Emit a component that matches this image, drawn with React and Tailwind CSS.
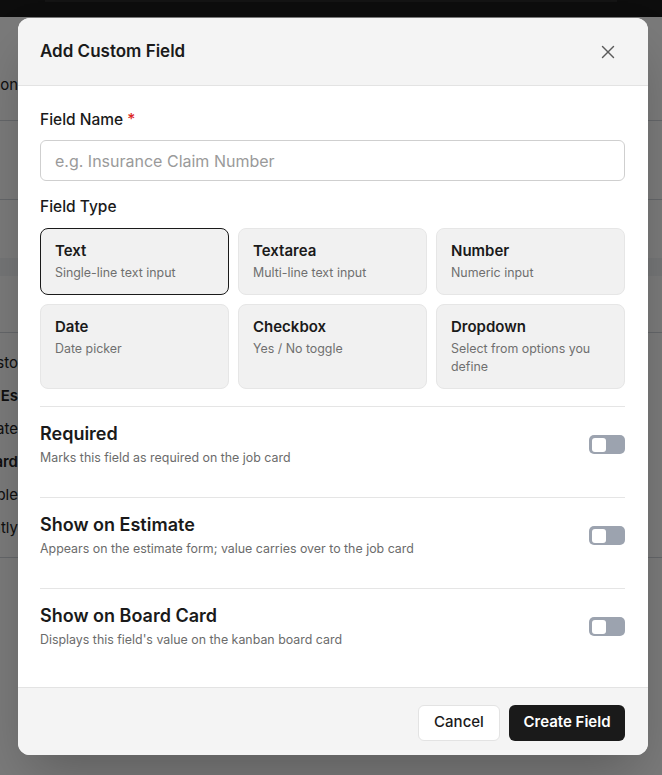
import { X } from 'lucide-react';

const fieldTypes = [
  { name: 'Text', desc: 'Single-line text input' },
  { name: 'Textarea', desc: 'Multi-line text input' },
  { name: 'Number', desc: 'Numeric input' },
  { name: 'Date', desc: 'Date picker' },
  { name: 'Checkbox', desc: 'Yes / No toggle' },
  { name: 'Dropdown', desc: 'Select from options you define' },
];

const toggles = [
  { title: 'Required', desc: 'Marks this field as required on the job card' },
  { title: 'Show on Estimate', desc: 'Appears on the estimate form; value carries over to the job card' },
  { title: 'Show on Board Card', desc: "Displays this field's value on the kanban board card" },
];

// cut-off text peeking out at the left edge behind the overlay
const Peek = ({ text, bold }) => (
  <div className="w-[18px] overflow-hidden flex justify-end">
    <span className={`whitespace-nowrap text-[15px] text-[#222] ${bold ? 'font-semibold' : ''}`}>{text}</span>
  </div>
);

const Toggle = () => (
  <div className="w-[36px] h-[19px] rounded-[5px] bg-[#9ca3af] p-[3px] flex items-center shrink-0">
    <div className="w-[14px] h-[14px] rounded-[3px] bg-white" />
  </div>
);

const App = () => {
  return (
    <div className="relative w-[662px] h-[775px] overflow-hidden bg-white" style={{ fontFamily: 'Inter, "Noto Sans", sans-serif' }}>
      {/* Page behind the dialog */}
      <div className="flex flex-col">
        <div className="h-[17px] bg-[#1c1c1c] px-[45px]">
          <div className="h-[2px] bg-[#2a2a2a]" />
        </div>
        <div className="h-[104px] border-b border-gray-300 flex items-end pb-[24px]">
          <Peek text="Description" />
        </div>
        <div className="h-[79px] border-b border-gray-300" />
        <div className="h-[58px]" />
        <div className="h-[18px] bg-gray-100" />
        <div className="h-[57px] border-b border-gray-300" />
        <div className="h-[225px] border-b border-gray-300 flex flex-col pt-[19px] gap-[14px]">
          <div className="h-[19px]"><Peek text="Custo" /></div>
          <div className="h-[19px]"><Peek text="Es" bold /></div>
          <div className="h-[19px]"><Peek text="Update" /></div>
          <div className="h-[19px]"><Peek text="Board" bold /></div>
          <div className="h-[19px]"><Peek text="Visible" /></div>
          <div className="h-[19px]"><Peek text="Currently" /></div>
        </div>
      </div>

      {/* Overlay */}
      <div className="absolute inset-0 bg-black/[0.52]" />

      {/* Dialog */}
      <div className="absolute top-[18px] left-[18px] w-[630px] h-[737px] bg-white rounded-xl overflow-hidden shadow-2xl flex flex-col">
        <header className="h-[68px] shrink-0 bg-[#f4f4f4] border-b border-[#e3e3e3] flex items-center justify-between pl-[22px] pr-[28px]">
          <h2 className="text-[17px] font-semibold text-[#1a1a1a]">Add Custom Field</h2>
          <button className="w-6 h-6 flex items-center justify-center text-[#5a5a5a]">
            <X size={22} strokeWidth={1.5} />
          </button>
        </header>

        <div className="flex-1 pl-[22px] pr-[23px] pt-[23px]">
          <label className="block text-[15.5px] leading-[22px] font-medium text-[#1a1a1a] mb-[9px]">
            Field Name <span className="text-[#dc2626]">*</span>
          </label>
          <input
            className="w-full h-[41px] px-[14px] rounded-md border border-[#cfcfcf] text-[16px] outline-none placeholder:text-[#9a9a9a]"
            placeholder="e.g. Insurance Claim Number"
          />

          <div className="text-[15.5px] leading-[22px] font-medium text-[#1a1a1a] mt-[15px] mb-[10px]">Field Type</div>
          <div className="grid grid-cols-3 gap-[9px]">
            {fieldTypes.map((t, i) => (
              <div
                key={t.name}
                className={`rounded-lg border bg-[#f1f1f1] px-[14px] pt-[12px] pb-[12px] ${
                  i === 0 ? 'border-[#1a1a1a]' : 'border-[#e6e6e6]'
                }`}
              >
                <div className="text-[15px] leading-[20px] font-semibold text-[#1a1a1a]">{t.name}</div>
                <div className="text-[12.4px] leading-[18px] text-[#6f6f6f] mt-[3px]">{t.desc}</div>
              </div>
            ))}
          </div>

          <div className="mt-[17px]">
            {toggles.map((t) => (
              <div key={t.title} className="border-t border-[#e5e5e5] pt-[15px] pb-[30px] flex items-center justify-between">
                <div>
                  <div className="text-[18px] leading-[24px] font-semibold text-[#1a1a1a]">{t.title}</div>
                  <div className="text-[12.4px] leading-[18px] text-[#6b6b6b] mt-[3px]">{t.desc}</div>
                </div>
                <Toggle />
              </div>
            ))}
          </div>
        </div>

        <footer className="h-[68px] shrink-0 bg-[#f4f4f4] border-t border-[#e3e3e3] flex items-center justify-end gap-[9px] pr-[23px] pt-[2px]">
          <button className="h-[36px] w-[82px] rounded-md bg-white border border-[#e3e3e3] text-[15px] font-medium text-[#1a1a1a]">
            Cancel
          </button>
          <button className="h-[36px] w-[116px] rounded-md bg-[#1a1a1a] text-[15px] font-semibold text-white">
            Create Field
          </button>
        </footer>
      </div>
    </div>
  );
};

export default App;
